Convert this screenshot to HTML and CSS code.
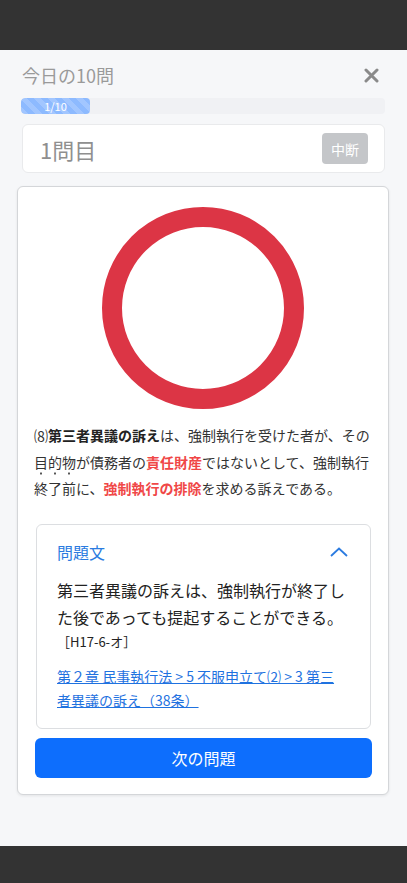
FILE: index.html
```html
<!DOCTYPE html>
<html lang="ja">
<head>
    <meta charset="UTF-8">
    <meta name="viewport" content="width=device-width, initial-scale=1.0">
    <title>今日の10問</title>
    <link rel="stylesheet" href="styles.css">
</head>
<body>
    <div class="sheet">
        <div class="sheet-header">
            <span class="sheet-title">今日の10問</span>
            <button class="close-btn" aria-label="閉じる">
                <svg width="15" height="15" viewBox="0 0 15 15">
                    <path d="M2 2 L13 13 M13 2 L2 13" stroke="#8a8a8a" stroke-width="3" stroke-linecap="round"/>
                </svg>
            </button>
        </div>

        <div class="progress">
            <div class="progress-bar" style="width: 69px;">1/10</div>
        </div>

        <div class="question-no">
            <span class="question-no-label">1問目</span>
            <button class="pause-btn">中断</button>
        </div>

        <div class="result-card">
            <svg class="mark" width="206" height="206" viewBox="0 0 206 206">
                <circle cx="103" cy="103" r="91" fill="none" stroke="#dc3545" stroke-width="20"/>
            </svg>

            <p class="explain">⑻<strong>第三者異議の訴え</strong>は、強制執行を受けた者が、その目的物が債務者の<strong class="hl">責任財産</strong>ではないとして、強制執行<span class="dots">終了前</span>に、<strong class="hl">強制執行の排除</strong>を求める訴えである。</p>

            <div class="question-box">
                <div class="question-head">
                    <span>問題文</span>
                    <svg width="18" height="10" viewBox="0 0 18 10">
                        <path d="M1 9 L9 1.5 L17 9" fill="none" stroke="#2b7be0" stroke-width="1.8"/>
                    </svg>
                </div>
                <p class="question-text">第三者異議の訴えは、強制執行が終了し<br>た後であっても提起することができる。</p>
                <p class="question-src">［H17-6-オ］</p>
                <a class="question-link" href="#">第２章 民事執行法 &gt; 5 不服申立て⑵ &gt; 3 第三<br>者異議の訴え（38条）</a>
            </div>

            <button class="next-btn">次の問題</button>
        </div>
    </div>
</body>
</html>
```

FILE: styles.css
```css
body {
    margin: 0;
    background-color: #333333;
    font-family: "Noto Sans CJK JP", "Noto Sans", sans-serif;
    color: #333;
}
button {
    font-family: inherit;
    border: none;
    cursor: pointer;
}
.sheet {
    margin-top: 50px;
    height: 796px;
    background-color: #f6f7f9;
    padding: 0 18px 0 17px;
    box-sizing: border-box;
}
.sheet-header {
    display: flex;
    justify-content: space-between;
    align-items: center;
    padding: 13px 10px 0 5px;
    height: 24px;
    line-height: 24px;
}
.sheet-title {
    font-size: 18px;
    color: #9a9a9a;
}
.close-btn {
    background: none;
    padding: 0;
    display: flex;
}
.progress {
    margin: 11px 4px 0 4px;
    height: 16px;
    background-color: #f0f1f4;
    border-radius: 4px;
    overflow: hidden;
}
.progress-bar {
    height: 100%;
    border-radius: 4px;
    background-color: #8dbaff;
    background-image: repeating-linear-gradient(45deg, rgba(255,255,255,0.18) 0 5px, transparent 5px 10px);
    color: #fff;
    font-size: 11px;
    line-height: 16px;
    text-align: center;
}
.question-no {
    margin: 10px 4px 0 5px;
    height: 49px;
    box-sizing: border-box;
    background-color: #fff;
    border: 1px solid #e9eaec;
    border-radius: 6px;
    display: flex;
    justify-content: space-between;
    align-items: center;
    padding: 0 16px 0 17px;
}
.question-no-label {
    font-size: 22px;
    color: #8f8f8f;
}
.pause-btn {
    width: 46px;
    height: 31px;
    border-radius: 4px;
    background-color: #c4c6c9;
    color: #fff;
    font-size: 14px;
}
.result-card {
    margin-top: 13px;
    background-color: #fff;
    border: 1px solid #d4d6d9;
    border-radius: 6px;
    box-shadow: 0 1px 3px rgba(0,0,0,0.08);
    padding: 16px;
}
.mark {
    display: block;
    margin: 2px auto 0 auto;
}
.explain {
    margin: 11px 0 0 0;
    font-size: 14px;
    line-height: 26.5px;
    color: #333;
}
.explain strong {
    color: #222;
}
.explain .hl {
    color: #f04747;
}
/* 傍点 */
.dots {
    position: relative;
}
.dots::before {
    content: "";
    position: absolute;
    left: 0;
    right: 0;
    top: -6px;
    height: 3px;
    background: radial-gradient(circle, #555 0.9px, transparent 1.3px) 0 0 / 14px 3px repeat-x;
}
.question-box {
    margin: 22px 1px 0 2px;
    border: 1px solid #dcdee1;
    border-radius: 6px;
    padding: 15px 20px 16px 20px;
}
.question-head {
    display: flex;
    justify-content: space-between;
    align-items: center;
    font-size: 16px;
    line-height: 24px;
    color: #2b7be0;
    padding-right: 2px;
}
.question-text {
    margin: 13px 0 0 0;
    font-size: 16px;
    line-height: 27px;
    color: #222;
}
.question-src {
    margin: 0;
    font-size: 13px;
    line-height: 22px;
    color: #222;
}
.question-link {
    display: block;
    margin-top: 11px;
    font-size: 14px;
    line-height: 24px;
    color: #1f72e0;
    text-decoration: underline;
}
.next-btn {
    display: block;
    width: calc(100% - 1px);
    margin: 9px 0 0 1px;
    height: 40px;
    border-radius: 6px;
    background-color: #0d6efd;
    color: #fff;
    font-size: 16px;
}
```
